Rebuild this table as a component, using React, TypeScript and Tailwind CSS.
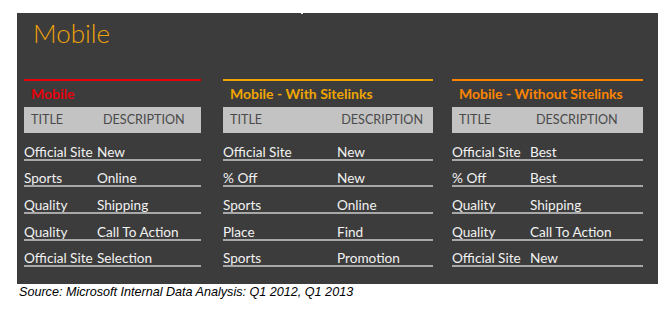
import React from "react";

type Col = {
  name: string;
  color: string;
  width: string;
  titleW: string;
  header: React.ReactNode;
  rows: [string, string][];
};

const rowFont = { fontFamily: "Lato, 'Noto Sans', sans-serif" };

function Column({ c }: { c: Col }) {
  return (
    <div className={`flex flex-col ${c.width}`}>
      <div className="h-[2px]" style={{ background: c.color }} />
      <div
        className="h-[26px] flex items-center pl-[7px] text-[14px] font-bold leading-none whitespace-nowrap"
        style={{ color: c.color, ...rowFont }}
      >
        {c.name}
      </div>
      {c.header}
      {c.rows.map(([t, d], i) => (
        <div key={i} className="flex flex-col">
          <div
            className="h-[24.7px] flex items-end text-[13.6px] leading-[14px] text-[#f2f2f2] whitespace-nowrap"
            style={rowFont}
          >
            <span className={`${c.titleW} shrink-0`}>{t}</span>
            <span>{d}</span>
          </div>
          <div className="h-[2px] bg-[#a8a8a8]" />
        </div>
      ))}
    </div>
  );
}

export default function App() {
  const hdr =
    "h-[26px] bg-[#c3c3c3] flex items-center text-[12.6px] leading-none text-[#4a4a4a] mb-[1px] whitespace-nowrap";
  const cols: Col[] = [
    {
      name: "Mobile",
      color: "#e8000b",
      width: "w-[177px]",
      titleW: "w-[73px]",
      header: (
        <div className={`${hdr} pl-[7px]`} style={rowFont}>
          <span className="w-[72px]">TITLE</span>
          <span>DESCRIPTION</span>
        </div>
      ),
      rows: [
        ["Official Site", "New"],
        ["Sports", "Online"],
        ["Quality", "Shipping"],
        ["Quality", "Call To Action"],
        ["Official Site", "Selection"],
      ],
    },
    {
      name: "Mobile - With Sitelinks",
      color: "#f0a500",
      width: "w-[210px]",
      titleW: "w-[114px]",
      header: (
        <div className={`${hdr} pl-[7px] pr-[10px] justify-between`} style={rowFont}>
          <span>TITLE</span>
          <span>DESCRIPTION</span>
        </div>
      ),
      rows: [
        ["Official Site", "New"],
        ["% Off", "New"],
        ["Sports", "Online"],
        ["Place", "Find"],
        ["Sports", "Promotion"],
      ],
    },
    {
      name: "Mobile - Without Sitelinks",
      color: "#ff8500",
      width: "w-[191px]",
      titleW: "w-[78px]",
      header: (
        <div className={`${hdr} pl-[7px]`} style={rowFont}>
          <span className="w-[77px]">TITLE</span>
          <span>DESCRIPTION</span>
        </div>
      ),
      rows: [
        ["Official Site", "Best"],
        ["% Off", "Best"],
        ["Quality", "Shipping"],
        ["Quality", "Call To Action"],
        ["Official Site", "New"],
      ],
    },
  ];

  return (
    <div className="w-[669px] h-[324px] bg-white pt-[13px] pl-[17px]">
      <div className="relative w-[641px] h-[271px] bg-[#3c3c3c] flex flex-col">
        <div className="absolute left-[284px] top-[-2px] w-[2px] h-[3px] bg-white" />
        <div
          className="h-[66px] pl-[16px] pt-[7px] text-[26px] font-light leading-none text-[#f0a30a]"
          style={rowFont}
        >
          Mobile
        </div>
        <div className="flex pl-[7px] gap-[22px]">
          <Column c={cols[0]} />
          <Column c={cols[1]} />
          <div className="ml-[-3px]">
            <Column c={cols[2]} />
          </div>
        </div>
      </div>
      <div
        className="pl-[2px] pt-[2px] text-[12.6px] italic text-black leading-none"
        style={{ fontFamily: "'Liberation Sans', Arial, sans-serif" }}
      >
        Source: Microsoft Internal Data Analysis: Q1 2012, Q1 2013
      </div>
    </div>
  );
}
